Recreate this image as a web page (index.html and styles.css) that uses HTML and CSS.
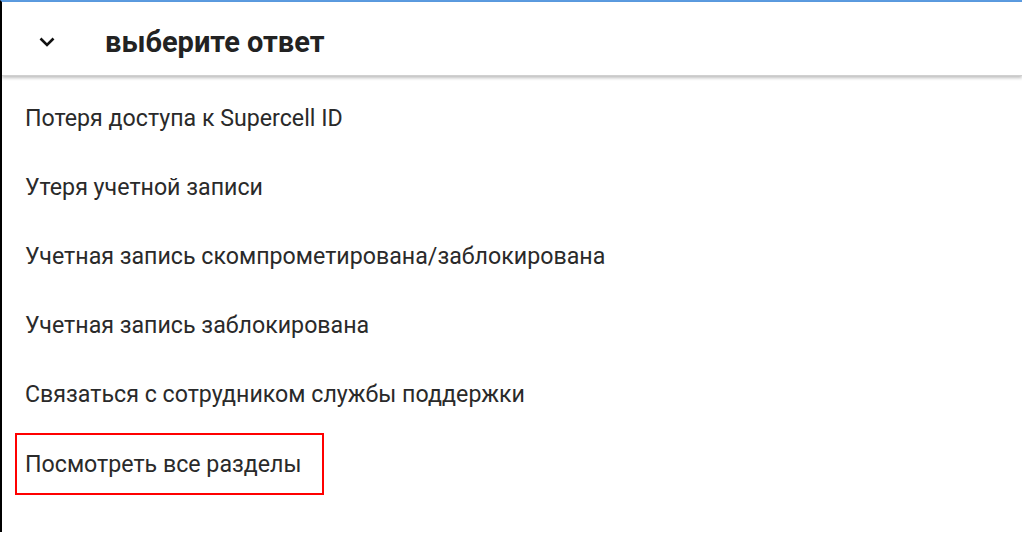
FILE: index.html
```html
<!DOCTYPE html>
<html lang="ru">
<head>
<meta charset="utf-8">
<link rel="stylesheet" href="styles.css">
</head>
<body>
<div class="frame">
  <header class="head">
    <span class="chev">
      <svg width="16" height="10" viewBox="0 0 16 10"><path d="M1.5 1.5 L8 8 L14.5 1.5" fill="none" stroke="#111" stroke-width="2.6"/></svg>
    </span>
    <h1 class="title">выберите ответ</h1>
  </header>
  <ul class="list">
    <li class="item">Потеря доступа к Supercell ID</li>
    <li class="item">Утеря учетной записи</li>
    <li class="item">Учетная запись скомпрометирована/заблокирована</li>
    <li class="item">Учетная запись заблокирована</li>
    <li class="item">Связаться с сотрудником службы поддержки</li>
    <li class="item marked">Посмотреть все разделы</li>
  </ul>
</div>
</body>
</html>
```
FILE: styles.css
```css
html, body { margin: 0; padding: 0; background: #fff; }
body { font-family: Roboto, "Noto Sans", sans-serif; width: 1022px; height: 534px; overflow: hidden; }
.frame {
  border-top: 2px solid #5b9be0;
  border-left: 2px solid #000;
  height: 532px;
  box-sizing: border-box;
}
.head {
  display: flex;
  align-items: center;
  box-sizing: border-box;
  height: 74px;
  padding-top: 6px;
  box-shadow: 0 2px 3px rgba(0,0,0,0.25);
  border-bottom: 1px solid #d0d0d0;
}
.chev { display: flex; width: 16px; margin-left: 37px; margin-right: 50px; }
.title { margin: 0; font-size: 29px; font-weight: 700; color: #222; }
.list { list-style: none; margin: 0; padding: 28px 0 0 0; }
.item {
  font-size: 23.2px;
  color: #2a2a2a;
  line-height: 28px;
  padding-left: 23px;
  margin-bottom: 41px;
}
.item.marked {
  display: inline-block;
  margin-left: 13px;
  padding: 15px 21px 15px 8px;
  border: 2px solid #f00;
  margin-top: -16px;
}
```
